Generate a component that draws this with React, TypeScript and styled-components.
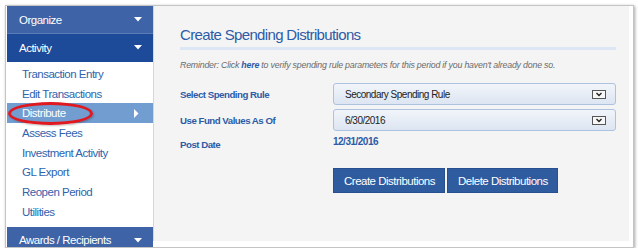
import React from 'react';
import styled, { createGlobalStyle } from 'styled-components';

const GlobalStyle = createGlobalStyle`
	body {
		margin: 0;
		background: #ffffff;
		font-family: 'Liberation Sans', Arial, sans-serif;
	}
`;

const Frame = styled.div`
	margin: 5px 0 0 5px;
	width: 629px;
	height: 243px;
	border: 1px solid #c4c4c4;
	box-shadow: 1px 1px 3px rgba(0, 0, 0, 0.35);
	background: #ffffff;
	padding: 0 4px 6px 1px;
	box-sizing: border-box;
	display: flex;
	overflow: hidden;
`;

const Sidebar = styled.nav`
	width: 146px;
	flex: none;
	border-right: 1px solid #d6d6d6;
	background: #ffffff;
	display: flex;
	flex-direction: column;
`;

const SectionHeader = styled.div<{ $tone: 'mid' | 'dark' }>`
	height: 28px;
	flex: none;
	display: flex;
	align-items: center;
	justify-content: space-between;
	padding: 0 11px 0 12px;
	background: ${(p) => (p.$tone === 'dark' ? '#1d4a99' : '#3e63a6')};
	border-bottom: 1px solid ${(p) => (p.$tone === 'dark' ? '#1d4a99' : '#5a7bb5')};
	box-sizing: border-box;
	color: #ffffff;
	font-size: 11.5px;
	letter-spacing: -0.5px;
	white-space: nowrap;
`;

const LinkList = styled.ul`
	list-style: none;
	margin: 0;
	padding: 2px 0 5px;
`;

const LinkItem = styled.li<{ $active?: boolean }>`
	position: relative;
	height: 19.7px;
	display: flex;
	align-items: center;
	justify-content: space-between;
	padding: 0 14px 0 15px;
	font-size: 11.5px;
	letter-spacing: -0.5px;
	color: ${(p) => (p.$active ? '#ffffff' : '#2f63ad')};
	background: ${(p) => (p.$active ? '#729dd0' : 'transparent')};
`;

const Callout = styled.span`
	position: absolute;
	left: 1px;
	top: -1px;
	width: 85px;
	height: 23px;
	border: 3px solid #e01820;
	border-radius: 50%;
	box-sizing: border-box;
	box-shadow: 1px 1px 2px rgba(0, 0, 0, 0.25);
	pointer-events: none;
`;

const Main = styled.main`
	flex: 1;
	background: #f4f4f4;
	padding: 19px 13px 0 26px;
	display: flex;
	flex-direction: column;
`;

const Title = styled.h1`
	margin: 0;
	font-size: 15px;
	letter-spacing: -0.65px;
	line-height: 20px;
	font-weight: normal;
	color: #2c5ba7;
`;

const Rule = styled.div`
	height: 3px;
	margin-top: 2px;
	background: #dce6f4;
`;

const Reminder = styled.p`
	margin: 8px 0 0;
	font-size: 8.8px;
	letter-spacing: -0.2px;
	line-height: 14px;
	font-style: italic;
	color: #6a6a6a;

	a {
		color: #2c5ba7;
		font-weight: bold;
		text-decoration: none;
	}
`;

const Form = styled.div`
	margin-top: 11px;
	display: grid;
	grid-template-columns: 153px 1fr;
	row-gap: 4px;
	align-items: center;
`;

const Label = styled.div<{ $offset?: number }>`
	font-size: 9.7px;
	letter-spacing: -0.5px;
	font-weight: bold;
	color: #2c5ba7;
	align-self: ${(p) => (p.$offset ? 'start' : 'center')};
	margin-top: ${(p) => p.$offset ?? 0}px;
`;

const Select = styled.div`
	height: 22px;
	box-sizing: border-box;
	border: 1px solid #adc2de;
	border-radius: 3px;
	background: linear-gradient(#f2f5fa, #dce5f2);
	display: flex;
	align-items: center;
	justify-content: space-between;
	padding: 0 9px 0 11px;
	font-size: 10px;
	letter-spacing: -0.5px;
	color: #222222;
`;

const Value = styled.div`
	font-size: 10px;
	letter-spacing: -0.5px;
	line-height: 14px;
	font-weight: bold;
	color: #2c5ba7;
	align-self: start;
`;

const Actions = styled.div`
	margin: 18px 0 0 153px;
	display: flex;
	gap: 2px;
`;

const Button = styled.button`
	height: 25px;
	padding: 0 9px 0 10px;
	border: 1px solid #284f8f;
	background: #2f5b9f;
	color: #ffffff;
	font-family: inherit;
	font-size: 11.5px;
	letter-spacing: -0.5px;
	cursor: pointer;
`;

const CaretDown = () => (
	<svg width="8" height="5" viewBox="0 0 8 5">
		<path d="M0 0 H8 L4 4.5 Z" fill="#ffffff" />
	</svg>
);

const CaretRight = () => (
	<svg width="5" height="9" viewBox="0 0 5 9">
		<path d="M0 0 V9 L4.5 4.5 Z" fill="#ffffff" />
	</svg>
);

const DropButton = () => (
	<svg width="14" height="9" viewBox="0 0 14 9">
		<rect x="0.5" y="0.5" width="13" height="8" fill="#f7f7f7" stroke="#555555" />
		<path d="M4.5 3 L7 5.5 L9.5 3" fill="none" stroke="#222222" strokeWidth="1.4" />
	</svg>
);

const links = [
	'Transaction Entry',
	'Edit Transactions',
	'Distribute',
	'Assess Fees',
	'Investment Activity',
	'GL Export',
	'Reopen Period',
	'Utilities',
];

export default function App() {
	return (
		<>
			<GlobalStyle />
			<Frame>
				<Sidebar>
					<SectionHeader $tone="mid">
						Organize
						<CaretDown />
					</SectionHeader>
					<SectionHeader $tone="dark">
						Activity
						<CaretDown />
					</SectionHeader>
					<LinkList>
						{links.map((l) => (
							<LinkItem key={l} $active={l === 'Distribute'}>
								{l}
								{l === 'Distribute' && (
									<>
										<CaretRight />
										<Callout />
									</>
								)}
							</LinkItem>
						))}
					</LinkList>
					<SectionHeader $tone="mid">
						Awards / Recipients
						<CaretDown />
					</SectionHeader>
				</Sidebar>
				<Main>
					<Title>Create Spending Distributions</Title>
					<Rule />
					<Reminder>
						Reminder: Click <a href="#">here</a> to verify spending rule parameters for this period if you
						haven't already done so.
					</Reminder>
					<Form>
						<Label>Select Spending Rule</Label>
						<Select>
							Secondary Spending Rule
							<DropButton />
						</Select>
						<Label>Use Fund Values As Of</Label>
						<Select>
							6/30/2016
							<DropButton />
						</Select>
						<Label $offset={4}>Post Date</Label>
						<Value>12/31/2016</Value>
					</Form>
					<Actions>
						<Button>Create Distributions</Button>
						<Button>Delete Distributions</Button>
					</Actions>
				</Main>
			</Frame>
		</>
	);
}
